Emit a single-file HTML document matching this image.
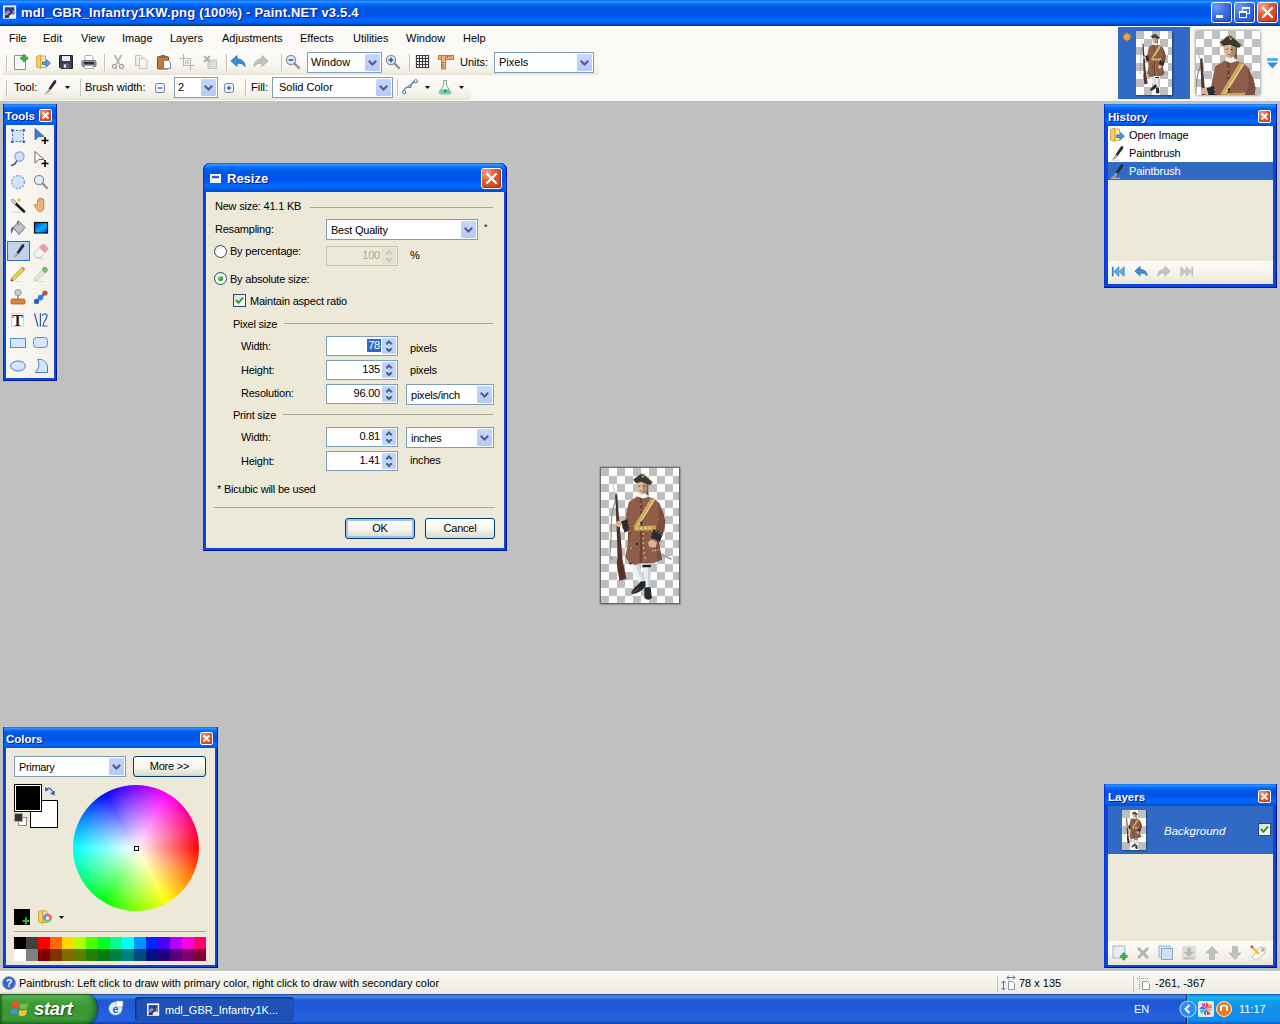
<!DOCTYPE html>
<html><head><meta charset="utf-8"><title>Paint.NET</title>
<style>
*{box-sizing:border-box;margin:0;padding:0}
html,body{width:1280px;height:1024px;overflow:hidden;background:#c0c0c0}
body{font-family:"Liberation Sans",sans-serif;font-size:11px;color:#000;position:relative}
.a{position:absolute}
.t{position:absolute;white-space:nowrap;line-height:13px;height:13px}
svg{position:absolute;overflow:visible}
.xpt{background:linear-gradient(to bottom,#0058ee 0%,#3593ff 4%,#288eff 8%,#127dff 12%,#036ffc 16%,#0262ee 22%,#0057e5 30%,#0054e3 40%,#0055eb 56%,#005bf5 66%,#026afe 76%,#0062ef 86%,#0052d6 92%,#0040ab 96%,#003092 100%)}
.win .xpt{background:linear-gradient(to bottom,#0058ee 0%,#3593ff 4%,#288eff 8%,#127dff 12%,#036ffc 16%,#0262ee 22%,#0057e5 30%,#0054e3 40%,#0055eb 56%,#005bf5 66%,#026afe 76%,#0062ef 86%,#0054dc 93%,#004ccc 100%)}
#title{position:absolute;left:0;top:0;width:1280px;height:26px}
.cap{position:absolute;font-weight:bold;font-size:13px;line-height:16px;color:#fff;text-shadow:1px 1px #0f1089;white-space:nowrap}
.wb{position:absolute;width:21px;height:21px;border:1px solid #fff;border-radius:3px;background:radial-gradient(circle at 25% 20%,#6c9cf8 0%,#3a6ee8 45%,#2450d0 100%);box-shadow:inset -1px -1px 1px rgba(0,0,60,.35)}
.wb.x{background:radial-gradient(circle at 25% 20%,#f4a98c 0%,#e6592f 40%,#c93c14 100%)}
.sx{position:absolute;width:13px;height:13px;border:1px solid #fff;border-radius:2px;background:radial-gradient(circle at 30% 25%,#eb9a82 0%,#d9552f 50%,#c03a16 100%)}
#top{position:absolute;left:0;top:26px;width:1280px;height:75px;background:#fbfaf7}
.tb{position:absolute;height:25px;border-radius:0 4px 4px 0;background:linear-gradient(to bottom,#fdfcfa 0%,#f9f8f3 50%,#f0ede2 90%,#e6e2d4 100%)}
.grip{position:absolute;left:6px;top:5px;width:1px;height:16px;background:#c5c2b2;box-shadow:1px 0 #fff}
.sep{position:absolute;width:1px;height:17px;background:#c5c2b2;box-shadow:1px 0 #fff}
.combo{position:absolute;height:21px;background:#fff;border:1px solid #7f9db9}
.combo .cb{position:absolute;right:1px;top:1px;width:15px;height:17px;background:linear-gradient(to bottom,#c6d6fd,#b7c9f8);border-radius:1px}
.combo .cb:after{content:"";position:absolute;left:3px;top:6px;width:9px;height:6px;background:#4d6185;clip-path:polygon(0 1.5px,1.5px 0,4.5px 3px,7.5px 0,9px 1.5px,4.5px 6px)}
.combo .t{left:3px;top:3px}
.num{position:absolute;width:72px;height:20px;background:#fff;border:1px solid #7f9db9}
.num .v{position:absolute;right:17px;top:2px;line-height:13px;white-space:nowrap}
.num .u,.num .d{position:absolute;right:1px;width:14px;height:8px;background:#c1d2fc}
.num .u{top:1px;border-radius:1px 1px 0 0}.num .d{top:9px;height:8px;border-radius:0 0 1px 1px}
.num .u:after,.num .d:after{content:"";position:absolute;left:3.5px;width:7px;height:5px;background:#4d6185}
.num .u:after{top:2px;clip-path:polygon(3.5px 0,7px 3.5px,5.5px 5px,3.5px 3px,1.5px 5px,0 3.5px)}
.num .d:after{top:1.5px;clip-path:polygon(3.5px 5px,7px 1.5px,5.5px 0,3.5px 2px,1.5px 0,0 1.5px)}
.num.dis{background:#ece9d8;border-color:#c9c7ba;color:#aca899}
.num.dis .u,.num.dis .d{background:#e3e1d4}
.num.dis .u:after,.num.dis .d:after{background:#c9c7ba}
.win{position:absolute;background:#0a48dc;box-shadow:inset 1px 0 #0831d9,inset -1px 0 #00138c,inset 0 -1px #00138c}
.win .tt{position:absolute;left:0;top:0;right:0;height:22px;box-shadow:inset 1px 0 #0831d9,inset -1px 0 #001ea0}
.win .tt span{position:absolute;left:3px;top:5px;color:#fff;font-weight:bold;font-size:11.5px;line-height:14px;text-shadow:1px 1px #0a1883;white-space:nowrap}
.win .cl{position:absolute;background:#ece9d8}
.hl{position:absolute;height:1px;background:#aca899}
.btn{position:absolute;height:21px;border:1px solid #003c74;border-radius:3px;background:linear-gradient(to bottom,#fff 0%,#f3f2ea 60%,#e2dfd0 90%,#d6d0c5 100%);text-align:center;line-height:19px}
#dlg,#dlg .t{letter-spacing:-.22px}
#status{position:absolute;left:0;top:971px;width:1280px;height:23px;background:linear-gradient(to bottom,#fff 0,#f8f7f2 2px,#f3f1e8 60%,#eeecdf 100%)}
#task{position:absolute;left:0;top:994px;width:1280px;height:30px;background:linear-gradient(to bottom,#1f2f86 0,#3165c4 3%,#3682e5 6%,#4490e6 10%,#3883e5 12%,#2b71e0 15%,#2663da 18%,#235bd6 20%,#2258d5 23%,#2157d6 38%,#245ddb 54%,#2562df 86%,#245fdc 89%,#2158d4 92%,#1d4ec0 95%,#1941a5 98%)}
</style></head>
<body>
<svg width="0" height="0" style="position:absolute">
<defs>
<pattern id="chk" width="16" height="16" patternUnits="userSpaceOnUse"><rect width="16" height="16" fill="#fff"/><rect width="8" height="8" fill="#bfbfbf"/><rect x="8" y="8" width="8" height="8" fill="#bfbfbf"/></pattern>
<g id="sold">
<path d="M11.7 16.8 L12.6 16.6 L14 26.5 L13 27 Z" fill="#b8bcc0"/>
<path d="M14.6 33 C9.500 44 10.500 58 10 72 C9.800 80 8.600 86 9.200 89 C9.800 91 11.500 91 12 90" stroke="#8c8c88" stroke-width="1.100" fill="none"/>
<path d="M14.300 26.500 L16.200 26.300 L17.600 45 L19.800 70 L21.600 92 L25.400 111 L18.400 112.800 L17 104 L15.800 95 L16.600 88 L15.600 60 Z" fill="#5b2f27"/>
<path d="M14.800 27 L16.600 55 L17.800 80" stroke="#3a3a3e" stroke-width=".9" fill="none"/>
<path d="M59.500 84.500 L70.800 90.500 L70 92 L58.500 87 Z" fill="#a0a09c"/>
<path d="M28.200 95 L36.400 93.500 L44.200 114 L38.800 116 Z" fill="#eef2f6"/>
<path d="M33 94.300 L36.400 93.500 L44.200 114 L42 114.800 Z" fill="#cfd8e2"/>
<path d="M41.400 97 L49.800 97 L49 120 L44.200 120 Z" fill="#e8edf2"/>
<path d="M47 97 L49.800 97 L49 120 L47.200 120 Z" fill="#c8d0da"/>
<path d="M28 94.200 L36.600 92.800 L37 95 L28.600 96.600 Z" fill="#1c1c1e"/>
<path d="M41.300 96.800 L49.900 96.800 L49.900 99.200 L41.400 99.200 Z" fill="#1c1c1e"/>
<path d="M30.200 124.500 C31.500 120.500 37 118 39.500 113.600 L44.400 113 L44.600 118 C42 122 36 126.200 31 126 Z" fill="#2a2a2e"/>
<path d="M43.400 119.200 L49.600 119.200 L50.800 129.500 C50 132.200 45 132.500 43.300 129.500 Z" fill="#2a2a2e"/>
<path d="M30.500 124.600 C33 123.600 36 122 38 120" stroke="#6a6a70" stroke-width=".8" fill="none"/>
<path d="M36 28.500 L47.600 29 L53 30.500 L58.500 35.300 L62 44 L64.300 53 L63.500 60 L61.800 66 L58 74 L59.500 84 L61 91.400 L52 95.500 L40.200 95 L34 97 L28.200 94.600 L24.200 89 L26 80 L30.500 64 L27 63.500 L21 60 L24.300 51 L26 42 L27.800 34 Z" fill="#8f5d4a"/>
<path d="M57 36 L62 44 L64.300 53 L63.500 60 L61.800 66 L58 74 L59.500 84 L61 91.400 L56 93.500 L54.500 62 L58 52 Z" fill="#7c4e3e"/>
<path d="M38.700 29.500 L40.900 29.500 L41.600 60 L41 95 L38.600 95.500 L39.200 60 Z" fill="#70432f"/>
<path d="M31 64 L27 63.500 L26.500 78 Z" fill="#7c4e3e"/>
<path d="M49.800 30.200 L54 31.800 L36.800 59.500 L32.600 58.500 Z" fill="#c9aa5a"/>
<path d="M52.800 31.300 L54 31.800 L36.800 59.500 L35.600 59.200 Z" fill="#e2cf90"/>
<path d="M33 58 L54.400 57.600 L54.600 62.400 L33.200 62.800 Z" fill="#c6a454"/>
<path d="M50 58 L54.400 57.600 L57 72 L53.500 72 Z" fill="#c6a454"/>
<g fill="#ead79c"><circle cx="36" cy="60.300" r="1"/><circle cx="40.200" cy="60.300" r="1.100"/><circle cx="44.500" cy="60.200" r="1"/><circle cx="48.500" cy="60.100" r="1"/>
<circle cx="42.200" cy="66" r=".8"/><circle cx="42.300" cy="70.500" r=".8"/><circle cx="42.300" cy="75" r=".8"/><circle cx="42.600" cy="80" r=".8"/><circle cx="43.200" cy="85" r=".8"/><circle cx="44" cy="90" r=".8"/>
<circle cx="39.800" cy="36" r=".6"/><circle cx="39.900" cy="42" r=".6"/><circle cx="40" cy="48" r=".6"/>
<circle cx="52" cy="83" r=".7"/><circle cx="54.500" cy="82.500" r=".7"/><circle cx="57" cy="82" r=".7"/><circle cx="30" cy="80" r=".7"/></g>
<circle cx="40.200" cy="54.600" r="1" fill="#1c1410"/><circle cx="36" cy="76" r="1" fill="#1c1410"/>
<path d="M20 53.500 L26.500 51.200 L29.200 61.500 L23.600 64.800 Z" fill="#2b2b2d"/>
<path d="M52.400 61 L61.800 65.500 L59 73.800 L49.800 69.500 Z" fill="#2b2b2d"/>
<g fill="#d8c48a"><circle cx="27.300" cy="55" r=".6"/><circle cx="27.900" cy="58" r=".6"/><circle cx="28" cy="61" r=".6"/><circle cx="55" cy="63.500" r=".6"/><circle cx="58" cy="65" r=".6"/><circle cx="60.300" cy="66.300" r=".6"/></g>
<ellipse cx="17.600" cy="56" rx="2.800" ry="2.900" fill="#dcb493"/>
<path d="M47.200 74 L50.500 71.500 L56 74 L55 79 L50 79.600 L47.600 77.500 Z" fill="#dcb493"/>
<path d="M37.300 25.500 L46 25.800 L46.400 29.300 L41.500 30.600 L37 28.600 Z" fill="#f4f4f0"/>
<path d="M44.600 15 L47.600 16 L47.400 27 L45 26.500 Z" fill="#6b5848"/>
<path d="M35.400 14 L46 15 L46.200 21 L44.500 25 L41 26.200 L37.600 24.800 L35.600 20.500 Z" fill="#d9b59a"/>
<path d="M42.500 15 L46 15 L46.200 21 L44.500 25 L41.500 26 Z" fill="#b08a70"/>
<path d="M37.400 18.200 L39.400 18 M41.600 18.200 L43.600 18.400" stroke="#3a2a20" stroke-width=".7"/>
<path d="M39 23 L42 23.200" stroke="#8a4a3c" stroke-width=".7"/>
<path d="M31.900 11.700 L40 5.200 L43.500 6.800 L51.700 14.100 L49.600 16.500 L40.700 13.600 L34.600 14.500 Z" fill="#3a3b2c"/>
<path d="M31.900 11.700 L40 5.200 L41.800 9.800 L43.500 6.800 L51.700 14.100" stroke="#d8d0a0" stroke-width=".7" fill="none"/>
<path d="M34.600 14.500 L40.700 13.600 L49.600 16.500" stroke="#1e1e16" stroke-width=".8" fill="none"/>
</g>
<symbol id="imgfull" viewBox="0 0 78 135" preserveAspectRatio="none"><use href="#sold"/></symbol>
</defs>
</svg>
<svg width="0" height="0" style="position:absolute"><defs>
<g id="i-brush"><path d="M13.5 1.2 C14.6 1.8 14.6 2.8 14 3.8 L8.6 11 L6.6 9.6 L11.6 2 C12.2 1.2 12.9 .9 13.5 1.2 Z" fill="#2b2b30"/><path d="M6.6 9.6 L8.6 11 L7.6 12.4 L5.8 11.2 Z" fill="#9aa0a8"/><path d="M5.8 11.2 L7.6 12.4 C6.6 14.2 4.4 14.6 2.4 14.4 C4 13.6 4.6 12.4 5.8 11.2 Z" fill="#c9a45c"/><path d="M2 15.2 H11" stroke="#d8d4c8" stroke-width="1"/></g>
<g id="i-open"><path d="M1.5 2.5 L6 1 L6 14.5 L1.5 13 Z" fill="#f3cf6a" stroke="#c99a2c" stroke-width=".8"/><path d="M6 2 L10.5 2 L10.5 13.5 L6 13.5 Z" fill="#fbe6a2" stroke="#c99a2c" stroke-width=".8"/><path d="M7.5 8 H11.5 V5.6 L15.4 9.2 L11.5 12.8 V10.4 H7.5 Z" fill="#4aa0e0" stroke="#1f6fb4" stroke-width=".8"/></g>
<g id="i-undo"><path d="M1 7 L7 1.6 V5 C11.5 5 15 7.6 15 12.6 C13.4 9.8 10.8 9 7 9.2 V12.4 Z" fill="#3d8fe0" stroke="#1c62b4" stroke-width=".8" stroke-linejoin="round"/></g>
<g id="i-redo"><path d="M15 7 L9 1.6 V5 C4.5 5 1 7.6 1 12.6 C2.6 9.8 5.2 9 9 9.2 V12.4 Z" fill="#c4c4c0" stroke="#a4a4a0" stroke-width=".8" stroke-linejoin="round"/></g>
<g id="i-mag"><circle cx="6" cy="6" r="4.6" fill="#dfeaf6" stroke="#8a949e" stroke-width="1.3"/><path d="M9.6 9.6 L14 14" stroke="#9a9388" stroke-width="2.4" stroke-linecap="round"/></g>
<g id="i-dd"><path d="M0 0 H5 L2.5 3 Z" fill="#000"/></g>
</defs></svg>

<div id="title" class="xpt">
<svg style="left:3px;top:5px" width="14" height="15" viewBox="0 0 16 16"><rect x=".5" y=".5" width="14" height="14" fill="#e8eef8" stroke="#fff"/><rect x="2" y="2" width="11" height="8" fill="#2a3f8c"/><path d="M2 8 L6 5 L9 8 L13 4 V10 H2Z" fill="#6b8fd8"/><path d="M3 14 L11 7" stroke="#7a1c1c" stroke-width="2"/><rect x="2" y="11" width="5" height="3" fill="#333"/></svg>
<span class="cap" style="left:21px;top:5px;letter-spacing:.2px">mdl_GBR_Infantry1KW.png (100%) - Paint.NET v3.5.4</span>
<div class="wb" style="left:1211px;top:2px"><div class="a" style="left:4px;top:12px;width:7px;height:3px;background:#fff"></div></div>
<div class="wb" style="left:1234px;top:2px"><div class="a" style="left:7px;top:4px;width:8px;height:7px;border:1px solid #fff;border-top-width:2px"></div><div class="a" style="left:4px;top:8px;width:8px;height:7px;border:1px solid #fff;border-top-width:2px;background:#2a5fdc"></div></div>
<div class="wb x" style="left:1257px;top:2px"><svg style="left:0;top:0" width="19" height="19"><path d="M5 5 L14 14 M14 5 L5 14" stroke="#fff" stroke-width="2.2" stroke-linecap="round"/></svg></div>
</div>

<div id="top">
<!-- menu -->
<span class="t" style="left:9px;top:6px">File</span>
<span class="t" style="left:43px;top:6px">Edit</span>
<span class="t" style="left:81px;top:6px">View</span>
<span class="t" style="left:122px;top:6px">Image</span>
<span class="t" style="left:170px;top:6px">Layers</span>
<span class="t" style="left:222px;top:6px">Adjustments</span>
<span class="t" style="left:300px;top:6px">Effects</span>
<span class="t" style="left:353px;top:6px">Utilities</span>
<span class="t" style="left:406px;top:6px">Window</span>
<span class="t" style="left:463px;top:6px">Help</span>

<!-- toolbar row 1 -->
<div class="tb" style="left:3px;top:24px;width:596px">
<div class="grip" style="left:3px"></div>
<!-- new -->
<svg style="left:10px;top:4px" width="16" height="16" viewBox="0 0 16 16"><path d="M1.500 1.500 H9.500 L12.500 4.500 V15.500 H1.500Z" fill="#f6f9fd" stroke="#8c8f94"/><path d="M10 .800 h2.400 v2.200 h2.200 v2.400 h-2.200 v2.200 h-2.400 v-2.200 h-2.200 v-2.400 h2.200z" fill="#35b835" stroke="#1e8a1e" stroke-width=".6"/></svg>
<svg style="left:32px;top:4px" width="16" height="16" viewBox="0 0 16 16"><use href="#i-open"/></svg>
<!-- save -->
<svg style="left:55px;top:4px" width="16" height="16" viewBox="0 0 16 16"><path d="M1.5 1.5 H14.5 V14.5 H3 L1.5 13Z" fill="#3a3f4a" stroke="#20242c"/><rect x="4" y="2" width="8" height="5" fill="#e8ecf2"/><rect x="4.5" y="9.5" width="7" height="5" fill="#5a606c"/><rect x="6" y="10.5" width="2" height="3" fill="#e8ecf2"/></svg>
<!-- print -->
<svg style="left:78px;top:4px" width="16" height="16" viewBox="0 0 16 16"><path d="M4 1.5 H10.5 L12 3 V7 H4Z" fill="#fff" stroke="#9aa0a8" stroke-width=".8"/><rect x="1" y="6.5" width="14" height="6" rx="1.2" fill="#8d939c" stroke="#5f656e" stroke-width=".8"/><rect x="3" y="8" width="10" height="2.4" fill="#2c3038"/><path d="M3.5 11.5 H12.5 V14.5 H3.5Z" fill="#f4f6f8" stroke="#9aa0a8" stroke-width=".8"/></svg>
<div class="sep" style="left:101px;top:4px"></div>
<!-- cut -->
<svg style="left:107px;top:4px" width="16" height="16" viewBox="0 0 16 16"><path d="M4.5 1 L9.5 10 M11.5 1 L6.5 10" stroke="#b4b4b0" stroke-width="1.6"/><circle cx="4.5" cy="12.5" r="2" fill="none" stroke="#a8a8a4" stroke-width="1.3"/><circle cx="11.5" cy="12.5" r="2" fill="none" stroke="#a8a8a4" stroke-width="1.3"/></svg>
<!-- copy -->
<svg style="left:130px;top:4px" width="16" height="16" viewBox="0 0 16 16"><path d="M2.5 1.5 H8 L10 3.5 V11.5 H2.5Z" fill="#eeeeea" stroke="#c2c2bc"/><path d="M6.5 4.5 H12 L14 6.5 V14.5 H6.5Z" fill="#f4f4f0" stroke="#c2c2bc"/></svg>
<!-- paste -->
<svg style="left:153px;top:4px" width="16" height="16" viewBox="0 0 16 16"><rect x="1.5" y="2.5" width="11" height="12.5" rx="1" fill="#c07a3c" stroke="#8a4e1e"/><rect x="4.5" y="1" width="5" height="3" rx="1" fill="#6a6e78"/><path d="M7.5 6.5 H12.5 L14.5 8.5 V14.5 H7.5Z" fill="#fff" stroke="#7a8494"/></svg>
<!-- crop -->
<svg style="left:176px;top:4px" width="16" height="16" viewBox="0 0 16 16"><path d="M4.5 0 V11.5 H16 M0 4.5 H11.5 V16" stroke="#b8b8b4" stroke-width="1.2" fill="none"/><rect x="6" y="6" width="4" height="4" fill="#d4d8dc"/></svg>
<!-- deselect -->
<svg style="left:199px;top:4px" width="16" height="16" viewBox="0 0 16 16"><rect x="6" y="6" width="8.5" height="8.5" fill="#dcdcd8" stroke="#c4c4c0"/><path d="M2 2 L8 8 M8 2 L2 8" stroke="#b0b0ac" stroke-width="2"/></svg>
<div class="sep" style="left:223px;top:4px"></div>
<svg style="left:227px;top:4px" width="16" height="16" viewBox="0 0 16 16"><use href="#i-undo"/></svg>
<svg style="left:250px;top:4px" width="16" height="16" viewBox="0 0 16 16"><use href="#i-redo"/></svg>
<div class="sep" style="left:278px;top:4px"></div>
<svg style="left:282px;top:4px" width="16" height="16" viewBox="0 0 16 16"><use href="#i-mag"/><path d="M3.6 6 H8.4" stroke="#2a46a8" stroke-width="1.4"/></svg>
<div class="combo" style="left:304px;top:2px;width:75px"><span class="t">Window</span><div class="cb"></div></div>
<svg style="left:382px;top:4px" width="16" height="16" viewBox="0 0 16 16"><use href="#i-mag"/><path d="M3.6 6 H8.4 M6 3.6 V8.4" stroke="#2a46a8" stroke-width="1.4"/></svg>
<div class="sep" style="left:406px;top:4px"></div>
<!-- grid -->
<svg style="left:412px;top:4px" width="16" height="16" viewBox="0 0 16 16"><rect x="1" y="1" width="13" height="13" fill="#fff"/><path d="M1.500 1 V14 M4.500 1 V14 M7.500 1 V14 M10.500 1 V14 M13.500 1 V14 M1 1.500 H14 M1 4.500 H14 M1 7.500 H14 M1 10.500 H14 M1 13.500 H14" stroke="#3c3c40" stroke-width="1.200"/></svg>
<!-- ruler -->
<svg style="left:435px;top:4px" width="16" height="16" viewBox="0 0 16 16"><rect x=".500" y="1.500" width="15" height="4" fill="#f4b070" stroke="#c47a2c"/><rect x="3.500" y="1.500" width="4" height="13.500" fill="#f4b070" stroke="#c47a2c"/><path d="M9.500 2 V4 M12 2 V4 M4 8.500 H6 M4 11 H6 M4 13 H6" stroke="#a05a14" stroke-width=".8"/></svg>
<span class="t" style="left:457px;top:6px">Units:</span>
<div class="combo" style="left:491px;top:2px;width:100px"><span class="t" style="left:4px">Pixels</span><div class="cb"></div></div>
</div>

<!-- toolbar row 2 -->
<div class="tb" style="left:3px;top:49px;width:468px">
<div class="grip" style="left:3px"></div>
<span class="t" style="left:11px;top:6px">Tool:</span>
<svg style="left:39px;top:4px" width="16" height="16" viewBox="0 0 16 16"><use href="#i-brush"/></svg>
<svg style="left:62px;top:11px" width="5" height="3"><use href="#i-dd"/></svg>
<div class="sep" style="left:77px;top:4px"></div>
<span class="t" style="left:82px;top:6px">Brush width:</span>
<svg style="left:152px;top:8px" width="10" height="10" viewBox="0 0 11 11"><rect x=".5" y=".5" width="10" height="10" rx="2.5" fill="#eef2fb" stroke="#5a70a8"/><path d="M3 5.5 H8" stroke="#2a3c78" stroke-width="1.2"/></svg>
<div class="combo" style="left:171px;top:2px;width:44px"><span class="t">2</span><div class="cb"></div></div>
<svg style="left:221px;top:8px" width="10" height="10" viewBox="0 0 11 11"><rect x=".5" y=".5" width="10" height="10" rx="2.5" fill="#eef2fb" stroke="#5a70a8"/><path d="M3 5.5 H8 M5.5 3 V8" stroke="#2a3c78" stroke-width="1.2"/></svg>
<div class="sep" style="left:242px;top:4px"></div>
<span class="t" style="left:248px;top:6px">Fill:</span>
<div class="combo" style="left:269px;top:2px;width:121px"><span class="t" style="left:6px">Solid Color</span><div class="cb"></div></div>
<div class="sep" style="left:394px;top:4px"></div>
<svg style="left:399px;top:4px" width="16" height="16" viewBox="0 0 16 16"><path d="M2 13 C2 7 6 9 8 7 C10 5 11 2 14 2" stroke="#3a7cc8" stroke-width="1.4" fill="none"/><circle cx="2.2" cy="13.2" r="1.6" fill="#fff" stroke="#3a5a88" stroke-width=".9"/><circle cx="8" cy="7.4" r="1.3" fill="#fff" stroke="#3a5a88" stroke-width=".9"/><circle cx="13.8" cy="2.2" r="1.6" fill="#fff" stroke="#3a5a88" stroke-width=".9"/></svg>
<svg style="left:422px;top:11px" width="5" height="3"><use href="#i-dd"/></svg>
<svg style="left:434px;top:4px" width="16" height="16" viewBox="0 0 16 16"><path d="M6 1.5 H10 M6.6 1.5 V6 L2.4 13 C2 14.2 2.6 15 4 15 H12 C13.4 15 14 14.2 13.6 13 L9.4 6 V1.5" fill="#f2faf6" stroke="#7aa898" stroke-width="1"/><path d="M4.2 10.600 H11.800 L13 13 C13.200 14 12.800 14.400 12 14.400 H4 C3.200 14.400 2.800 14 3 13Z" fill="#6ccfa4"/><rect x="7" y="10.500" width="2.500" height="3" fill="#2e9a6c"/></svg>
<svg style="left:456px;top:11px" width="5" height="3"><use href="#i-dd"/></svg>
</div>

<!-- thumbnails -->
<div class="a" style="left:1118px;top:1px;width:72px;height:72px;background:#316ac5"></div>
<svg style="left:1122px;top:6px" width="10" height="10" viewBox="0 0 11 11"><path d="M5.5 0 L6.6 2.8 L9.4 1.6 L8.2 4.4 L11 5.5 L8.2 6.6 L9.4 9.4 L6.6 8.2 L5.5 11 L4.4 8.2 L1.6 9.4 L2.8 6.6 L0 5.5 L2.8 4.4 L1.6 1.6 L4.4 2.8Z" fill="#f5a623"/></svg>
<svg style="left:1136px;top:5px;box-shadow:1px 1px 2px rgba(0,0,0,.45)" width="36" height="64"><rect width="36" height="64" fill="url(#chk)"/><use href="#imgfull" width="36" height="64"/></svg>
<svg style="left:1196px;top:5px;box-shadow:0 0 3px rgba(0,0,0,.6)" width="64" height="64"><rect width="64" height="64" fill="url(#chk)"/></svg><svg style="left:1196px;top:5px;overflow:hidden" width="64" height="64" viewBox="10.4 1.6 58 58"><use href="#sold"/></svg>
<svg style="left:1267px;top:32px" width="11" height="11" viewBox="0 0 11 11"><rect x="0" y="0" width="11" height="3" rx="1" fill="#5ab0ec"/><path d="M0 4.5 H11 L5.5 10.5Z" fill="#2e90dc"/></svg>
</div>
<!-- TOOLS -->
<div class="win" style="left:3px;top:104px;width:54px;height:277px">
<div class="tt xpt"><span style="left:2px">Tools</span></div>
<div class="sx" style="left:36px;top:5px"><svg style="left:0;top:0" width="11" height="11"><path d="M2.5 2.5 L8.5 8.5 M8.5 2.5 L2.5 8.5" stroke="#fff" stroke-width="2"/></svg></div>
<div class="cl" style="left:3px;top:21px;width:48px;height:253px;background:linear-gradient(to right,#f9f8f4,#f3f1e8)">
<div class="a" style="left:1px;top:116px;width:23px;height:20px;background:#c1d2ee;border:1px solid #316ac5"></div>
<!-- r0 -->
<svg style="left:4px;top:3px" width="16" height="16" viewBox="0 0 16 16"><rect x="2.5" y="2.5" width="11" height="11" fill="#cfe4fb" stroke="#3a62c8" stroke-dasharray="2 1.5"/><rect x="1" y="1" width="2.4" height="2.4" fill="#3a62c8"/><rect x="12.6" y="1" width="2.4" height="2.4" fill="#3a62c8"/><rect x="1" y="12.6" width="2.4" height="2.4" fill="#3a62c8"/><rect x="12.6" y="12.6" width="2.4" height="2.4" fill="#3a62c8"/></svg>
<svg style="left:27px;top:3px" width="16" height="16" viewBox="0 0 16 16"><path d="M2 .5 L2 12 L5.6 8.6 L11 8.4 Z" fill="#3f7fd0" stroke="#2a5ca8" stroke-width=".8"/><path d="M8.5 12.5 H15.5 M12 9 V16" stroke="#000" stroke-width="1.6"/></svg>
<!-- r1 -->
<svg style="left:4px;top:26px" width="16" height="16" viewBox="0 0 16 16"><circle cx="9.5" cy="5.5" r="4.6" fill="#cfe4fb" stroke="#7aa4d8" stroke-width="1.2"/><path d="M6.6 9.6 C6 13 3.4 14 1 14.5" stroke="#3a4a68" stroke-width="1.5" fill="none"/></svg>
<svg style="left:27px;top:26px" width="16" height="16" viewBox="0 0 16 16"><path d="M2 .5 L2 12 L5.6 8.6 L11 8.4 Z" fill="#fff" stroke="#555" stroke-width=".9"/><path d="M8.5 12.5 H15.5 M12 9 V16" stroke="#000" stroke-width="1.6"/></svg>
<!-- r2 -->
<svg style="left:4px;top:49px" width="16" height="16" viewBox="0 0 16 16"><circle cx="8" cy="8" r="6.4" fill="#cfe4fb" stroke="#6a8fd0" stroke-width="1.1" stroke-dasharray="2 1.4"/></svg>
<svg style="left:27px;top:49px" width="16" height="16" viewBox="0 0 16 16"><use href="#i-mag"/></svg>
<!-- r3 -->
<svg style="left:4px;top:72px" width="16" height="16" viewBox="0 0 16 16"><path d="M2.5 3.5 L14 14.5" stroke="#1c1c20" stroke-width="2.6" stroke-linecap="round"/><path d="M2.5 3.5 L5 6" stroke="#d8d8d8" stroke-width="2.4" stroke-linecap="round"/><path d="M9 1 V5 M7 3 H11" stroke="#e0b030" stroke-width="1"/><path d="M2 15.3 H12" stroke="#dcd8cc"/></svg>
<svg style="left:27px;top:72px" width="16" height="16" viewBox="0 0 16 16"><path d="M4.5 8 V3.4 C4.5 2.4 6 2.4 6 3.4 V2 C6 1 7.6 1 7.6 2 V1.8 C7.6 .8 9.2 .8 9.2 1.8 V2.8 C9.2 1.8 10.8 1.8 10.8 2.8 V10 C10.8 13 9.6 14.6 7.4 14.6 C5.4 14.6 4.4 13.6 3.2 11.6 L1.4 8.6 C.8 7.6 2.2 6.8 3 7.8 Z" fill="#e9b57c" stroke="#b07838" stroke-width=".8"/></svg>
<!-- r4 -->
<svg style="left:4px;top:95px" width="16" height="16" viewBox="0 0 16 16"><path d="M3 7.5 L9 1.5 L15 7.5 L9 14.5 Z" fill="#bfc3c8" stroke="#6a6e76" stroke-width="1"/><path d="M9 1 C7 .5 7 4 9 5" stroke="#555" fill="none"/><path d="M3.2 6.5 C.6 8 .4 11 1.6 14 C2.4 11 3 9.6 4.2 8.6 Z" fill="#2f5fc8"/></svg>
<svg style="left:27px;top:95px" width="16" height="16" viewBox="0 0 16 16"><defs><linearGradient id="gg" x1="0" y1="0" x2="1" y2="1"><stop offset="0" stop-color="#0a28d8"/><stop offset=".55" stop-color="#00b4ff"/><stop offset="1" stop-color="#0a3ce0"/></linearGradient></defs><rect x="1.5" y="2.5" width="13" height="10.5" fill="url(#gg)" stroke="#111" stroke-width="1.2"/></svg>
<!-- r5 -->
<svg style="left:4px;top:118px" width="16" height="16" viewBox="0 0 16 16"><use href="#i-brush"/></svg>
<svg style="left:27px;top:118px" width="16" height="16" viewBox="0 0 16 16"><path d="M1 10.5 L8.4 2.2 C9.4 1.2 10.6 1.2 11.6 2 L14.4 4.4 C15.2 5.2 15.2 6.4 14.4 7.2 L7.4 14.6 L4 14.6 L1.4 12.4 C.8 11.8 .6 11 1 10.5 Z" fill="#f4f4f2" stroke="#b8b4ac" stroke-width=".8"/><path d="M6 4.9 L8.4 2.2 C9.4 1.2 10.6 1.2 11.6 2 L14.4 4.4 C15.2 5.2 15.2 6.4 14.4 7.2 L12 9.8 Z" fill="#ee9aac"/><path d="M3 15.6 H12" stroke="#e0dcd0"/></svg>
<!-- r6 -->
<svg style="left:4px;top:141px" width="16" height="16" viewBox="0 0 16 16"><path d="M12.6 1 L15 3.4 L4.2 14.2 L1 15 L1.8 11.8 Z" fill="#f2cf4c" stroke="#a8862a" stroke-width=".8"/><path d="M12.6 1 L15 3.4 L13.8 4.6 L11.4 2.2Z" fill="#e07a7a"/><path d="M1 15 L1.5 13 L3 14.5Z" fill="#222"/><path d="M5 15.6 H12" stroke="#e0dcd0"/></svg>
<svg style="left:27px;top:141px" width="16" height="16" viewBox="0 0 16 16"><path d="M9.2 4.2 L11.8 6.8 L4.4 14.2 L1.4 15 L1.8 11.6 Z" fill="#e4e4e0" stroke="#b8b8b0" stroke-width=".7"/><path d="M9 2.6 L11.2 .8 C12.6 0 15.6 2.6 14.8 4.6 L13.2 7 L12 7 L9 4 Z" fill="#7cb86a"/><path d="M4 15.6 H12" stroke="#e0dcd0"/></svg>
<!-- r7 -->
<svg style="left:4px;top:164px" width="16" height="16" viewBox="0 0 16 16"><circle cx="8" cy="3.6" r="3.2" fill="#c8ccd0" stroke="#888c90" stroke-width=".8"/><rect x="7" y="6" width="2" height="5" fill="#9a9ea4"/><path d="M1 11.2 C1 10 2 10 3 10 H13 C14 10 15 10 15 11.2 V14 C15 15 14 15 13 15 H3 C2 15 1 15 1 14 Z" fill="#d9843c" stroke="#a85a1c" stroke-width=".8"/></svg>
<svg style="left:27px;top:164px" width="16" height="16" viewBox="0 0 16 16"><circle cx="3.6" cy="12.4" r="2.6" fill="#2a5cc8"/><circle cx="7.6" cy="8.6" r="2.8" fill="#2e8ae0"/><circle cx="12" cy="4" r="2.6" fill="#c84848"/><path d="M5 11 L10.6 5.4" stroke="#2e7ad8" stroke-width="2.4"/></svg>
<!-- r8 -->
<svg style="left:4px;top:187px" width="16" height="16" viewBox="0 0 16 16"><rect x="1.5" y="1.5" width="12" height="13" fill="#fff" stroke="#c0c4cc" stroke-width=".7"/><text x="7.5" y="13.6" text-anchor="middle" font-family="Liberation Serif,serif" font-weight="bold" font-size="16" fill="#222">T</text></svg>
<svg style="left:27px;top:187px" width="16" height="16" viewBox="0 0 16 16"><path d="M1.5 1.5 L5 14.5 M7.4 1 V14.5 M9.6 4 C9.8 1 14 1 14 4 C14 7 10 10 10 14 H14.4" stroke="#2e58b0" stroke-width="1.2" fill="none"/></svg>
<!-- r9 -->
<svg style="left:4px;top:210px" width="16" height="16" viewBox="0 0 16 16"><rect x=".5" y="3.5" width="15" height="9" fill="#d3e6fb" stroke="#5a8ac8"/></svg>
<svg style="left:27px;top:210px" width="16" height="16" viewBox="0 0 16 16"><rect x=".5" y="2.5" width="14" height="10" rx="3" fill="#d3e6fb" stroke="#5a8ac8"/></svg>
<!-- r10 -->
<svg style="left:4px;top:233px" width="16" height="16" viewBox="0 0 16 16"><ellipse cx="8" cy="8" rx="7.4" ry="5" fill="#d3e6fb" stroke="#4a7ac0"/></svg>
<svg style="left:27px;top:233px" width="16" height="16" viewBox="0 0 16 16"><path d="M4.6 1.5 C9 .6 13 3 14.5 8 V14.5 H2 C5 12 7.6 7 4.6 1.5 Z" fill="#d3e6fb" stroke="#4a7ac0"/></svg>
</div></div>

<!-- HISTORY -->
<div class="win" style="left:1104px;top:104px;width:173px;height:184px">
<div class="tt xpt"><span style="left:4px;top:6px">History</span></div>
<div class="sx" style="left:154px;top:6px"><svg style="left:0;top:0" width="11" height="11"><path d="M2.5 2.5 L8.5 8.5 M8.5 2.5 L2.5 8.5" stroke="#fff" stroke-width="2"/></svg></div>
<div class="cl" style="left:4px;top:22px;width:165px;height:158px">
<div class="a" style="left:0;top:0;width:165px;height:36px;background:#fff"></div>
<div class="a" style="left:0;top:36px;width:165px;height:18px;background:#316ac5"></div>
<svg style="left:1px;top:1px" width="16" height="16" viewBox="0 0 16 16"><use href="#i-open"/></svg>
<svg style="left:1px;top:19px" width="16" height="16" viewBox="0 0 16 16"><use href="#i-brush"/></svg>
<svg style="left:1px;top:37px" width="16" height="16" viewBox="0 0 16 16"><use href="#i-brush"/></svg>
<span class="t" style="left:21px;top:3px;letter-spacing:-.1px">Open Image</span>
<span class="t" style="left:21px;top:21px;letter-spacing:-.1px">Paintbrush</span>
<span class="t" style="left:21px;top:39px;letter-spacing:-.1px;color:#fff">Paintbrush</span>
<div class="a" style="left:0;top:135px;width:165px;height:23px;background:linear-gradient(to bottom,#fdfcfa,#f4f2ea 60%,#eae6d8)"></div>
<svg style="left:3px;top:139px" width="14" height="14" viewBox="0 0 16 16"><path d="M2 2 V13" stroke="#2e8ad8" stroke-width="2"/><path d="M9 2 V13 L3.4 7.5Z M15 2 V13 L9.4 7.5Z" fill="#5ab0ec" stroke="#2e7ac8" stroke-width=".8"/></svg>
<svg style="left:26px;top:139px" width="14" height="14" viewBox="0 0 16 16"><use href="#i-undo"/></svg>
<svg style="left:49px;top:139px" width="14" height="14" viewBox="0 0 16 16"><use href="#i-redo"/></svg>
<svg style="left:72px;top:139px" width="14" height="14" viewBox="0 0 16 16"><path d="M14 2 V13" stroke="#bcbcb8" stroke-width="2"/><path d="M1 2 V13 L6.6 7.5Z M7 2 V13 L12.6 7.5Z" fill="#c8c8c4" stroke="#b0b0ac" stroke-width=".8"/></svg>
</div></div>

<!-- LAYERS -->
<div class="win" style="left:1104px;top:784px;width:173px;height:184px">
<div class="tt xpt"><span style="left:4px;top:6px">Layers</span></div>
<div class="sx" style="left:154px;top:6px"><svg style="left:0;top:0" width="11" height="11"><path d="M2.5 2.5 L8.5 8.5 M8.5 2.5 L2.5 8.5" stroke="#fff" stroke-width="2"/></svg></div>
<div class="cl" style="left:4px;top:22px;width:165px;height:159px">
<div class="a" style="left:0;top:0;width:165px;height:48px;background:#316ac5"></div>
<svg style="left:14px;top:4px;box-shadow:1px 1px 1px rgba(0,0,0,.3)" width="24" height="40"><rect width="24" height="40" fill="url(#chk)"/><use href="#imgfull" width="24" height="40"/></svg>
<span class="t" style="left:56px;top:19px;font-size:11.5px;font-style:italic;color:#fff">Background</span>
<div class="a" style="left:150px;top:17px;width:13px;height:13px;background:linear-gradient(135deg,#dcdcd4,#fff);border:1px solid #2c4c6c"><svg style="left:1px;top:1px" width="9" height="9"><path d="M1 4 L3.5 6.8 L8 1.6" stroke="#21a121" stroke-width="2" fill="none"/></svg></div>
<div class="a" style="left:0;top:135px;width:165px;height:24px;background:linear-gradient(to bottom,#fdfcfa,#f4f2ea 60%,#eae6d8)"></div>
<svg style="left:4px;top:139px" width="16" height="16" viewBox="0 0 16 16"><rect x="1" y="1" width="12" height="12" fill="#e6eef8" stroke="#a8b4c8"/><path d="M10.6 8 h2.4 v2.2 h2.2 v2.4 h-2.2 v2.2 h-2.4 v-2.2 h-2.2 v-2.4 h2.2z" fill="#3cb43c" stroke="#1e8a1e" stroke-width=".5"/></svg>
<svg style="left:27px;top:139px" width="16" height="16" viewBox="0 0 16 16"><path d="M3 3 L13 13 M13 3 L3 13" stroke="#b4b4b0" stroke-width="3"/></svg>
<svg style="left:50px;top:139px" width="16" height="16" viewBox="0 0 16 16"><rect x="1" y="1" width="11" height="11" fill="#dce8f6" stroke="#9ab0cc"/><rect x="3.5" y="3.5" width="11" height="11" fill="#cfe0f4" stroke="#8aa4c4"/></svg>
<svg style="left:73px;top:139px" width="16" height="16" viewBox="0 0 16 16"><rect x="1" y="1" width="14" height="14" fill="#deded8"/><path d="M6 3 H10 V7 H13 L8 12 L3 7 H6Z" fill="#b8b8b4"/><rect x="3" y="12.6" width="10" height="1.6" fill="#b8b8b4"/></svg>
<svg style="left:96px;top:139px" width="16" height="16" viewBox="0 0 16 16"><path d="M8 1.5 L14 8 H10.5 V14.5 H5.5 V8 H2Z" fill="#c0c0bc" stroke="#acaca8" stroke-width=".6"/></svg>
<svg style="left:119px;top:139px" width="16" height="16" viewBox="0 0 16 16"><path d="M8 14.5 L14 8 H10.5 V1.5 H5.5 V8 H2Z" fill="#c0c0bc" stroke="#acaca8" stroke-width=".6"/></svg>
<svg style="left:142px;top:139px" width="16" height="16" viewBox="0 0 16 16"><path d="M2 12 L10 2 L15.5 3 L15 8 L6 15.5Z" fill="#f8f8f4" stroke="#a8aca8" stroke-width=".8"/><circle cx="12.6" cy="5" r="1.2" fill="#fff" stroke="#888"/><path d="M1.5 1.5 L9 9" stroke="#e8c040" stroke-width="2.4"/><path d="M1 1 L2.6 2.6" stroke="#c04848" stroke-width="2.4"/></svg>
</div></div>
<!-- COLORS -->
<style>#pal i{position:absolute;width:12px;height:12px}</style>
<div class="win" style="left:3px;top:727px;width:215px;height:241px">
<div class="tt xpt"><span style="left:3px">Colors</span></div>
<div class="sx" style="left:197px;top:5px"><svg style="left:0;top:0" width="11" height="11"><path d="M2.5 2.5 L8.5 8.5 M8.5 2.5 L2.5 8.5" stroke="#fff" stroke-width="2"/></svg></div>
<div class="cl" style="left:3px;top:21px;width:209px;height:217px">
<div class="combo" style="left:8px;top:8px;width:112px"><span class="t" style="left:4px;top:4px;letter-spacing:-.35px">Primary</span><div class="cb"></div></div>
<div class="btn" style="left:127px;top:8px;width:73px;letter-spacing:-.2px">More &gt;&gt;</div>
<div class="a" style="left:24px;top:52px;width:28px;height:28px;background:#fff;border:1px solid #000"></div>
<div class="a" style="left:8px;top:36px;width:28px;height:28px;background:#000;border:1px solid #000;box-shadow:inset 0 0 0 1px #fff"></div>
<svg style="left:39px;top:38px" width="10" height="11" viewBox="0 0 10 11"><path d="M1 4 C2 1.5 5 1.5 6.5 4 L8.5 7" stroke="#3a62c8" stroke-width="1.3" fill="none"/><path d="M0 1 L0 5.5 L4 4Z M9.8 4.5 L9.6 9.6 L5 7.6Z" fill="#3a62c8"/></svg>
<div class="a" style="left:12px;top:69px;width:9px;height:9px;background:#fff;border:1px solid #888"></div>
<div class="a" style="left:8px;top:65px;width:9px;height:9px;background:#333;border:1px solid #aaa"></div>
<div class="a" style="left:67px;top:37px;width:126px;height:126px;border-radius:50%;background:radial-gradient(circle closest-side,#fff 0%,rgba(255,255,255,0) 100%),conic-gradient(from 90deg,#f00,#ff0,#0f0,#0ff,#00f,#f0f,#f00)"></div>
<div class="a" style="left:128px;top:98px;width:5px;height:5px;border:1px solid #000;background:#fff"></div>
<div class="a" style="left:8px;top:161px;width:16px;height:16px;background:#000"></div>
<svg style="left:16px;top:169px" width="8" height="8"><path d="M4 .5 V7.5 M.5 4 H7.5" stroke="#2cb42c" stroke-width="2"/></svg>
<svg style="left:31px;top:161px" width="16" height="16" viewBox="0 0 16 16"><path d="M1.5 2.5 L6 1 L6 14.5 L1.5 13 Z" fill="#f3cf6a" stroke="#c99a2c" stroke-width=".8"/><path d="M6 2 L10 2 L10 13.5 L6 13.5 Z" fill="#fbe6a2" stroke="#c99a2c" stroke-width=".8"/><circle cx="10.5" cy="9" r="4.4" fill="#c8a0e0"/><path d="M10.5 9 L10.5 4.6 A4.4 4.4 0 0 1 14.3 11.2Z" fill="#f06a6a"/><path d="M10.5 9 L14.3 11.2 A4.4 4.4 0 0 1 6.7 11.2Z" fill="#6ad06a"/><path d="M10.5 9 L6.7 11.2 A4.4 4.4 0 0 1 10.5 4.6Z" fill="#6a8af0"/><circle cx="10.5" cy="9" r="1.6" fill="#fff"/></svg>
<svg style="left:53px;top:168px" width="5" height="3"><use href="#i-dd"/></svg>
<div class="hl" style="left:8px;top:183px;width:192px"></div>
<div id="pal" class="a" style="left:8px;top:189px;width:192px;height:24px"><i style="left:0px;top:0;background:#000000"></i><i style="left:12px;top:0;background:#404040"></i><i style="left:24px;top:0;background:#ff0000"></i><i style="left:36px;top:0;background:#ff6a00"></i><i style="left:48px;top:0;background:#ffd800"></i><i style="left:60px;top:0;background:#b6ff00"></i><i style="left:72px;top:0;background:#4cff00"></i><i style="left:84px;top:0;background:#00ff21"></i><i style="left:96px;top:0;background:#00ff90"></i><i style="left:108px;top:0;background:#00ffff"></i><i style="left:120px;top:0;background:#0094ff"></i><i style="left:132px;top:0;background:#0026ff"></i><i style="left:144px;top:0;background:#4800ff"></i><i style="left:156px;top:0;background:#b200ff"></i><i style="left:168px;top:0;background:#ff00dc"></i><i style="left:180px;top:0;background:#ff006e"></i><i style="left:0px;top:12px;background:#ffffff"></i><i style="left:12px;top:12px;background:#808080"></i><i style="left:24px;top:12px;background:#7f0000"></i><i style="left:36px;top:12px;background:#7f3300"></i><i style="left:48px;top:12px;background:#7f6a00"></i><i style="left:60px;top:12px;background:#5b7f00"></i><i style="left:72px;top:12px;background:#267f00"></i><i style="left:84px;top:12px;background:#007f0e"></i><i style="left:96px;top:12px;background:#007f46"></i><i style="left:108px;top:12px;background:#007f7f"></i><i style="left:120px;top:12px;background:#004a7f"></i><i style="left:132px;top:12px;background:#00137f"></i><i style="left:144px;top:12px;background:#21007f"></i><i style="left:156px;top:12px;background:#57007f"></i><i style="left:168px;top:12px;background:#7f006e"></i><i style="left:180px;top:12px;background:#7f0037"></i></div>
</div></div>
<!-- CANVAS -->
<div class="a" style="left:601px;top:468px;width:78px;height:135px;box-shadow:0 0 0 1px rgba(0,0,0,.3),0 0 0 2px rgba(0,0,0,.12),1px 1px 2px 1px rgba(0,0,0,.15)"></div>
<svg style="left:601px;top:468px" width="78" height="135"><rect width="78" height="135" fill="url(#chk)"/><use href="#sold"/></svg>

<!-- DIALOG -->
<div id="dlg" class="win" style="left:203px;top:163px;width:304px;height:388px;border-radius:8px 8px 0 0">
<div class="tt xpt" style="height:29px;border-radius:7px 7px 0 0"></div>
<svg style="left:7px;top:11px" width="11" height="9" viewBox="0 0 11 9"><rect x=".5" y=".5" width="10" height="8" fill="#dfe8f8" stroke="#fff"/><rect x="2" y="2" width="7" height="2.2" fill="#3a5ab8"/><rect x="2" y="5" width="7" height="2" fill="#fff"/></svg>
<span class="cap" style="left:24px;top:8px;letter-spacing:0">Resize</span>
<div class="wb x" style="left:278px;top:5px"><svg style="left:0;top:0" width="19" height="19"><path d="M5 5 L14 14 M14 5 L5 14" stroke="#fff" stroke-width="2.2" stroke-linecap="round"/></svg></div>
<div class="cl" style="left:3px;top:29px;width:298px;height:356px">
<!-- coordinates inside client: x-206, y-192 -->
<span class="t" style="left:9px;top:8px">New size: 41.1 KB</span>
<div class="hl" style="left:104px;top:15px;width:183px"></div>
<span class="t" style="left:9px;top:31px">Resampling:</span>
<div class="combo" style="left:120px;top:27px;width:152px"><span class="t" style="left:4px;top:4px">Best Quality</span><div class="cb"></div></div>
<span class="t" style="left:278px;top:29px;font-size:9px">*</span>
<div class="a rad" style="left:8px;top:53px"></div>
<span class="t" style="left:24px;top:53px">By percentage:</span>
<div class="num dis" style="left:120px;top:54px"><span class="v">100</span><div class="u"></div><div class="d"></div></div>
<span class="t" style="left:204px;top:57px">%</span>
<div class="a rad" style="left:8px;top:80px"><div class="a" style="left:3px;top:3px;width:5px;height:5px;border-radius:50%;background:radial-gradient(circle at 35% 35%,#7fe07f,#21a121 60%,#0e7a0e)"></div></div>
<span class="t" style="left:24px;top:81px">By absolute size:</span>
<div class="a" style="left:27px;top:102px;width:13px;height:13px;background:linear-gradient(135deg,#dcdcd4,#fff);border:1px solid #2c4c6c"><svg style="left:1px;top:1px" width="9" height="9"><path d="M1 4 L3.5 6.8 L8 1.6" stroke="#21a121" stroke-width="2" fill="none"/></svg></div>
<span class="t" style="left:44px;top:103px">Maintain aspect ratio</span>
<span class="t" style="left:27px;top:126px">Pixel size</span>
<div class="hl" style="left:78px;top:131px;width:209px"></div>
<span class="t" style="left:35px;top:148px">Width:</span>
<div class="num" style="left:120px;top:144px"><span class="v" style="background:#316ac5;color:#fff;padding:0 1px;right:16px">78</span><div class="u"></div><div class="d"></div></div>
<span class="t" style="left:204px;top:150px">pixels</span>
<span class="t" style="left:35px;top:172px">Height:</span>
<div class="num" style="left:120px;top:168px"><span class="v">135</span><div class="u"></div><div class="d"></div></div>
<span class="t" style="left:204px;top:172px">pixels</span>
<span class="t" style="left:35px;top:195px">Resolution:</span>
<div class="num" style="left:120px;top:192px"><span class="v">96.00</span><div class="u"></div><div class="d"></div></div>
<div class="combo" style="left:200px;top:192px;width:88px"><span class="t" style="left:4px;top:4px">pixels/inch</span><div class="cb"></div></div>
<span class="t" style="left:27px;top:217px">Print size</span>
<div class="hl" style="left:77px;top:222px;width:210px"></div>
<span class="t" style="left:35px;top:239px">Width:</span>
<div class="num" style="left:120px;top:235px"><span class="v">0.81</span><div class="u"></div><div class="d"></div></div>
<div class="combo" style="left:200px;top:235px;width:88px"><span class="t" style="left:4px;top:4px">inches</span><div class="cb"></div></div>
<span class="t" style="left:35px;top:263px">Height:</span>
<div class="num" style="left:120px;top:259px"><span class="v">1.41</span><div class="u"></div><div class="d"></div></div>
<span class="t" style="left:204px;top:262px">inches</span>
<span class="t" style="left:11px;top:291px">* Bicubic will be used</span>
<div class="hl" style="left:8px;top:315px;width:281px"></div>
<div class="btn" style="left:139px;top:326px;width:70px;box-shadow:inset 0 0 0 2px #a6c3f0;border-color:#003c74">OK</div>
<div class="btn" style="left:219px;top:326px;width:70px">Cancel</div>
</div></div>
<style>
.rad{width:13px;height:13px;border-radius:50%;border:1px solid #2c4c6c;background:radial-gradient(circle at 65% 65%,#fff 30%,#dcdcd4 100%)}
</style>
<!-- STATUS -->
<div id="status">
<svg style="left:2px;top:5px" width="14" height="14" viewBox="0 0 14 14"><circle cx="7" cy="7" r="6.5" fill="#3a62c8" stroke="#8aa0dc" stroke-width="1"/><text x="7" y="11" text-anchor="middle" font-family="Liberation Sans,sans-serif" font-weight="bold" font-size="11" fill="#fff">?</text></svg>
<span class="t" style="left:19px;top:6px;letter-spacing:-.04px">Paintbrush: Left click to draw with primary color, right click to draw with secondary color</span>
<div class="a" style="left:997px;top:5px;width:1px;height:16px;background:#c5c2b2"></div>
<svg style="left:1000px;top:4px" width="16" height="16" viewBox="0 0 16 16"><path d="M8.5 6.5 H12.5 L14.5 8.5 V14.5 H8.5Z" fill="#fff" stroke="#8a96a8"/><path d="M3.5 6 V15 M1.5 8 L3.5 6 L5.5 8 M1.5 13 L3.5 15 L5.5 13" stroke="#3a7cc8" fill="none"/><path d="M7 2.500 H15 M9 .5 L7 2.500 L9 4.500 M13 .5 L15 2.500 L13 4.500" stroke="#3a7cc8" fill="none"/></svg>
<span class="t" style="left:1019px;top:6px">78 x 135</span>
<div class="a" style="left:1133px;top:5px;width:1px;height:16px;background:#c5c2b2"></div>
<svg style="left:1136px;top:4px" width="16" height="16" viewBox="0 0 16 16"><path d="M6.500 6.500 H11.500 L13.500 8.500 V14.500 H6.500Z" fill="#fff" stroke="#8a96a8"/><path d="M3.500 1 V15 M1 3.500 H13" stroke="#8a96a8" stroke-dasharray="1 1"/></svg>
<span class="t" style="left:1155px;top:6px">-261, -367</span>
</div>
<!-- TASKBAR -->
<div id="task">
<div class="a" style="left:0;top:0;width:97px;height:30px;border-radius:0 10px 10px 0/0 15px 15px 0;background:linear-gradient(to bottom,#2c7a2a 0%,#62ba5c 7%,#4ca846 15%,#3f9c38 30%,#3a9634 60%,#3d9b37 82%,#2e7e2b 100%);box-shadow:inset 2px 0 2px rgba(0,50,0,.45),inset -3px 0 4px rgba(0,50,0,.4),1px 0 2px rgba(0,0,60,.5)"></div>
<svg style="left:10px;top:5px" width="20" height="18" viewBox="0 0 22 20"><path d="M2 4 C5 2 7 2.5 10 4 L9 10 C6 8.500 4 8.500 1 10Z" fill="#e8542c"/><path d="M11.500 4.500 C14 6 17 6 20 4 L19 10 C16 12 13 11.500 10.500 10.500Z" fill="#6cc04a"/><path d="M.8 11.500 C4 10 6 10.500 8.800 11.500 L7.800 17.500 C5 16 3 16 0 17.500Z" fill="#4a8ce8"/><path d="M10.300 12 C13 13 16 13.500 18.800 11.500 L17.800 17.500 C15 19.500 12 19 9.300 18Z" fill="#f4c430"/></svg>
<span class="a" style="left:34px;top:3px;font-size:18.5px;line-height:24px;font-weight:bold;font-style:italic;color:#fff;text-shadow:1px 1px 2px rgba(0,0,0,.55);letter-spacing:-.3px">start</span>
<svg style="left:107px;top:6px" width="17" height="17" viewBox="0 0 17 17"><circle cx="8.500" cy="8.500" r="7" fill="#dff0ff" stroke="#3a6cc8" stroke-width="1"/><text x="8.500" y="12.500" text-anchor="middle" font-family="Liberation Sans,sans-serif" font-weight="bold" font-size="11" fill="#2a5cc0">e</text><rect x="9" y="1" width="7" height="6" fill="#fff" stroke="#888" stroke-width=".6"/></svg>
<div class="a" style="left:135px;top:3px;width:159px;height:24px;border-radius:3px;background:#1e52b7;box-shadow:inset 1px 1px 2px rgba(0,0,40,.55)"></div>
<svg style="left:147px;top:9px" width="13" height="14" viewBox="0 0 16 16"><rect x=".5" y=".5" width="14" height="14" fill="#e8eef8" stroke="#fff"/><rect x="2" y="2" width="11" height="8" fill="#2a3f8c"/><path d="M2 8 L6 5 L9 8 L13 4 V10 H2Z" fill="#6b8fd8"/><path d="M3 14 L11 7" stroke="#7a1c1c" stroke-width="2"/><rect x="2" y="11" width="5" height="3" fill="#333"/></svg>
<span class="t" style="left:165px;top:10px;color:#fff">mdl_GBR_Infantry1K...</span>
<span class="t" style="left:1134px;top:9px;color:#fff">EN</span>
<div class="a" style="left:1186px;top:0;width:94px;height:30px;background:linear-gradient(to bottom,#0c59b9 0,#139ee9 6%,#18b5f2 12%,#139ee9 22%,#1290e8 50%,#0f8eef 85%,#0d7fe0 93%,#095bc9 100%);border-left:1px solid #092e51;box-shadow:inset 1px 0 #18bbff"></div>
<svg style="left:1179px;top:6px" width="18" height="18" viewBox="0 0 18 18"><circle cx="9" cy="9" r="8" fill="#2a8cf0" stroke="#9ad0ff" stroke-width="1.200"/><path d="M10.500 5 L6.500 9 L10.500 13" stroke="#fff" stroke-width="2" fill="none"/></svg>
<svg style="left:1198px;top:7px" width="16" height="16" viewBox="0 0 16 16"><rect width="16" height="16" rx="2" fill="#e8e8f0"/><path d="M8 8 L8 1 L11 4Z" fill="#e83c3c"/><path d="M8 8 L15 8 L12 11Z" fill="#e8c03c"/><path d="M8 8 L8 15 L5 12Z" fill="#3cb43c"/><path d="M8 8 L1 8 L4 5Z" fill="#3c6ce8"/><path d="M8 8 L13 3 L14 7Z" fill="#e87c3c"/><path d="M8 8 L13 13 L9 14Z" fill="#a03ce8"/><path d="M8 8 L3 13 L2 9Z" fill="#3cc0c0"/><path d="M8 8 L3 3 L7 2Z" fill="#e83ca0"/></svg>
<svg style="left:1216px;top:7px" width="16" height="16" viewBox="0 0 16 16"><circle cx="8" cy="8" r="7.500" fill="#e87a1c" stroke="#fff3d8" stroke-width="1"/><path d="M5 10 V6 C5 4 11 4 11 6 V10" stroke="#fff" stroke-width="1.800" fill="none"/></svg>
<span class="t" style="left:1239px;top:9px;color:#fff">11:17</span>
</div>
</body></html>
